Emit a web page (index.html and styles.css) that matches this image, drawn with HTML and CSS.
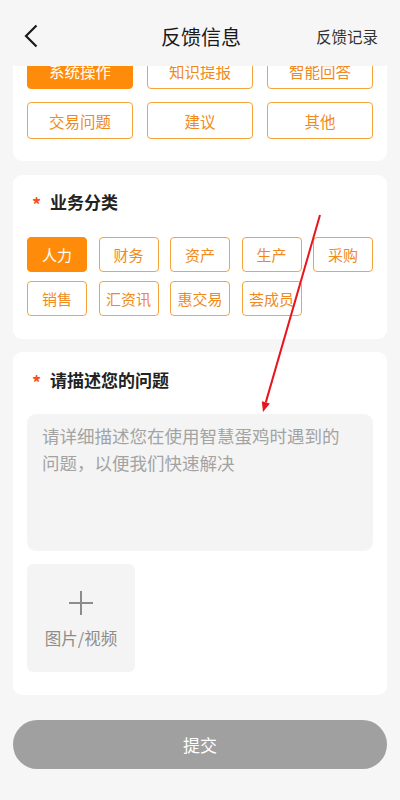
FILE: index.html
```html
<!DOCTYPE html>
<html lang="zh-CN">

<head>
    <meta charset="UTF-8">
    <meta name="viewport" content="width=device-width, initial-scale=1.0">
    <title>反馈信息</title>
    <link rel="stylesheet" href="styles.css">
</head>

<body>
    <div class="page">
        <header class="topbar">
            <a class="back" href="#">
                <svg width="14" height="24" viewBox="0 0 14 24">
                    <path d="M12.5 1.5 L2 12 L12.5 22.5" fill="none" stroke="#1a1a1a" stroke-width="2.2" />
                </svg>
            </a>
            <h1 class="title">反馈信息</h1>
            <a class="history" href="#">反馈记录</a>
        </header>

        <main class="main">
            <div class="scroll">
                <section class="card card-first">
                    <div class="types">
                        <button class="type active">系统操作</button>
                        <button class="type">知识提报</button>
                        <button class="type">智能回答</button>
                        <button class="type">交易问题</button>
                        <button class="type">建议</button>
                        <button class="type">其他</button>
                    </div>
                </section>

                <section class="card">
                    <h2 class="card-title"><span class="star">*</span>业务分类</h2>
                    <div class="tags">
                        <button class="tag active">人力</button>
                        <button class="tag">财务</button>
                        <button class="tag">资产</button>
                        <button class="tag">生产</button>
                        <button class="tag">采购</button>
                        <button class="tag">销售</button>
                        <button class="tag">汇资讯</button>
                        <button class="tag">惠交易</button>
                        <button class="tag">荟成员</button>
                    </div>
                </section>

                <section class="card">
                    <h2 class="card-title"><span class="star">*</span>请描述您的问题</h2>
                    <textarea class="desc" placeholder="请详细描述您在使用智慧蛋鸡时遇到的问题，以便我们快速解决"></textarea>
                    <div class="upload">
                        <svg width="24" height="24" viewBox="0 0 24 24">
                            <path d="M12 0 V24 M0 12 H24" stroke="#8c8c8c" stroke-width="2" />
                        </svg>
                        <span>图片/视频</span>
                    </div>
                </section>

                <button class="submit">提交</button>
            </div>
        </main>

        <!-- annotation arrow drawn over the screen -->
        <svg class="arrow" width="400" height="800" viewBox="0 0 400 800">
            <line x1="320" y1="215" x2="265.8" y2="402.4" stroke="#e8141e" stroke-width="2" />
            <polygon points="263,412 269.8,403.6 261.8,401.2" fill="#e8141e" />
        </svg>
    </div>
</body>

</html>
```

FILE: styles.css
```css
* {
    box-sizing: border-box;
}

body {
    margin: 0;
    background-color: #f6f6f6;
    font-family: "Noto Sans CJK SC", "Noto Sans", sans-serif;
    color: #222;
}

.page {
    position: relative;
    width: 400px;
    height: 800px;
    overflow: hidden;
}

.topbar {
    display: grid;
    grid-template-columns: 1fr auto 1fr;
    align-items: center;
    height: 66px;
    padding: 6px 22px 0 24px;
    background-color: #f6f6f6;
}

.back {
    display: flex;
    align-items: center;
}

.title {
    margin: 0;
    font-size: 20px;
    font-weight: 400;
    color: #1a1a1a;
}

.history {
    justify-self: end;
    font-size: 15.5px;
    color: #333;
    text-decoration: none;
}

.main {
    height: 734px;
    overflow: hidden;
}

.scroll {
    margin-top: -28px;
    padding: 0 13px;
}

.card {
    background-color: #fff;
    border-radius: 9px;
    padding: 15px 14px 23px;
    margin-bottom: 13.5px;
}

.card-first {
    padding-top: 14px;
    padding-bottom: 22px;
    border-radius: 0 0 9px 9px;
}

.card-title {
    display: flex;
    align-items: center;
    height: 24px;
    margin: 0 0 23px;
    font-size: 17px;
    font-weight: 700;
    color: #222;
}

.star {
    width: 23px;
    padding-left: 5px;
    font-size: 18px;
    color: #f5521f;
    line-height: 1;
    padding-top: 5px;
}

.types {
    display: grid;
    grid-template-columns: repeat(3, 1fr);
    column-gap: 14px;
    row-gap: 13px;
}

.type,
.tag {
    font-family: inherit;
    background-color: #fff;
    color: #f08a1c;
    border: 1px solid #f5a53c;
    border-radius: 4px;
    padding: 0;
    cursor: pointer;
}

.type {
    height: 37px;
    font-size: 15.5px;
}

.tags {
    display: grid;
    grid-template-columns: repeat(5, 1fr);
    column-gap: 11.5px;
    row-gap: 9px;
}

.tag {
    height: 35px;
    font-size: 15px;
}

.type.active,
.tag.active {
    background-color: #ff8b0a;
    border-color: #ff8b0a;
    color: #fff;
}

.desc {
    display: block;
    width: 100%;
    height: 137px;
    margin: 0 0 13px;
    padding: 8px 24px 8px 15px;
    border: none;
    border-radius: 9px;
    background-color: #f4f4f4;
    font-family: inherit;
    font-size: 17.5px;
    line-height: 27px;
    resize: none;
    outline: none;
}

.desc::placeholder {
    color: #a3a3a3;
}

.upload {
    display: flex;
    flex-direction: column;
    align-items: center;
    justify-content: center;
    gap: 12px;
    width: 108px;
    height: 108px;
    padding-top: 4px;
    border-radius: 6px;
    background-color: #f4f4f4;
    color: #8c8c8c;
    font-size: 16.5px;
    line-height: 22px;
}

.submit {
    display: block;
    width: 100%;
    height: 49px;
    margin-top: 25px;
    border: none;
    border-radius: 25px;
    background-color: #a0a0a0;
    color: #fff;
    font-family: inherit;
    font-size: 17px;
    cursor: pointer;
}

.arrow {
    position: absolute;
    top: 0;
    left: 0;
    pointer-events: none;
}
```
